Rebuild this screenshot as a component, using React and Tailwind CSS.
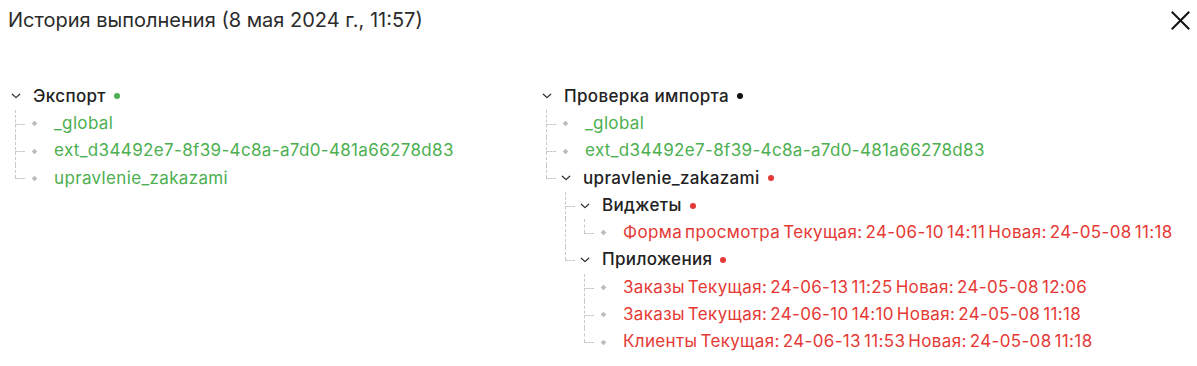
import React from "react";

const GREEN = "text-[#4caf50]";
const RED = "text-[#e53935] [word-spacing:-2.1px]";

const left = {
  label: "Экспорт",
  dot: "bg-[#4caf50]",
  children: [
    { label: "_global", color: GREEN },
    { label: "ext_d34492e7-8f39-4c8a-a7d0-481a66278d83", color: GREEN },
    { label: "upravlenie_zakazami", color: GREEN },
  ],
};

const right = {
  label: "Проверка импорта",
  dot: "bg-[#111]",
  children: [
    { label: "_global", color: GREEN },
    { label: "ext_d34492e7-8f39-4c8a-a7d0-481a66278d83", color: GREEN },
    {
      label: "upravlenie_zakazami",
      dot: "bg-[#e53935]",
      children: [
        {
          label: "Виджеты",
          dot: "bg-[#e53935]",
          children: [
            { label: "Форма просмотра Текущая: 24-06-10 14:11 Новая: 24-05-08 11:18", color: RED },
          ],
        },
        {
          label: "Приложения",
          dot: "bg-[#e53935]",
          children: [
            { label: "Заказы Текущая: 24-06-13 11:25 Новая: 24-05-08 12:06", color: RED },
            { label: "Заказы Текущая: 24-06-10 14:10 Новая: 24-05-08 11:18", color: RED },
            { label: "Клиенты Текущая: 24-06-13 11:53 Новая: 24-05-08 11:18", color: RED },
          ],
        },
      ],
    },
  ],
};

function Chevron() {
  return (
    <svg width="10" height="6" viewBox="0 0 10 6" fill="none">
      <path d="M1.3 1.2 L5 4.6 L8.7 1.2" stroke="#2a2a2a" strokeWidth="1.2" strokeLinecap="round" strokeLinejoin="round" />
    </svg>
  );
}

function Diamond() {
  return (
    <svg width="7" height="7" viewBox="0 0 7 7">
      <polygon points="3.5,0.7 6.3,3.5 3.5,6.3 0.7,3.5" fill="#bcbcbc" />
    </svg>
  );
}

function IndentUnit({ kind }) {
  return (
    <div className="relative w-[19px] h-full shrink-0">
      {kind === "line" && (
        <div className="absolute left-[9px] top-0 bottom-0 border-l border-dashed border-[#c9c9c9]" />
      )}
      {kind === "tee" && (
        <>
          <div className="absolute left-[9px] top-0 bottom-0 border-l border-dashed border-[#c9c9c9]" />
          <div className="absolute left-[9px] right-0 top-1/2 border-t border-dashed border-[#c9c9c9]" />
        </>
      )}
      {kind === "last" && (
        <>
          <div className="absolute left-[9px] top-0 h-1/2 border-l border-dashed border-[#c9c9c9]" />
          <div className="absolute left-[9px] right-0 top-1/2 border-t border-dashed border-[#c9c9c9]" />
        </>
      )}
    </div>
  );
}

function renderRows(node, guides, isLast, depth, rows) {
  const units = [];
  for (let i = 0; i < depth - 1; i++) {
    units.push(guides[i] ? "line" : "none");
  }
  if (depth > 0) units.push(isLast ? "last" : "tee");
  const hasChildren = !!node.children;
  rows.push(
    <div key={rows.length} className="flex items-center h-[27.3px]">
      {units.map((k, i) => (
        <IndentUnit key={i} kind={k} />
      ))}
      <div className="w-[19px] h-full shrink-0 flex items-center justify-center">
        {hasChildren ? <Chevron /> : <Diamond />}
      </div>
      <span
        className={`whitespace-nowrap tracking-[0.35px] ${hasChildren ? "ml-[8px] font-medium" : "ml-[10px] font-normal"} ${
          node.color ? node.color : "text-[#222]"
        }`}
      >
        {node.label}
      </span>
      {node.dot && <span className={`ml-[8px] w-[6px] h-[6px] rounded-full ${node.dot}`} />}
    </div>
  );
  if (hasChildren) {
    const g = depth > 0 ? [...guides, !isLast] : [];
    node.children.forEach((c, i) => {
      renderRows(c, g, i === node.children.length - 1, depth + 1, rows);
    });
  }
  return rows;
}

function Tree({ data }) {
  const rows = renderRows(data, [], true, 0, []);
  return <div className="flex flex-col">{rows}</div>;
}

export default function App() {
  return (
    <div
      className="w-[1197px] h-[366px] bg-white overflow-hidden"
      style={{ fontFamily: "Inter, 'Noto Sans', sans-serif" }}
    >
      <div className="flex items-center justify-between h-[40px] pl-[8px] pr-[7px]">
        <h1 className="text-[20px] font-normal text-[#2b2b2b] leading-none">
          История выполнения (8 мая 2024 г., 11:57)
        </h1>
        <button className="w-[20px] h-[20px] flex items-center justify-center">
          <svg width="19" height="19" viewBox="0 0 19 19">
            <path d="M1.5 1.5 L17.5 17.5 M17.5 1.5 L1.5 17.5" stroke="#111" strokeWidth="2" strokeLinecap="square" />
          </svg>
        </button>
      </div>
      <div className="flex pt-[42.8px] text-[17px]">
        <div className="w-[537px] pl-[6px] shrink-0">
          <Tree data={left} />
        </div>
        <div>
          <Tree data={right} />
        </div>
      </div>
    </div>
  );
}
